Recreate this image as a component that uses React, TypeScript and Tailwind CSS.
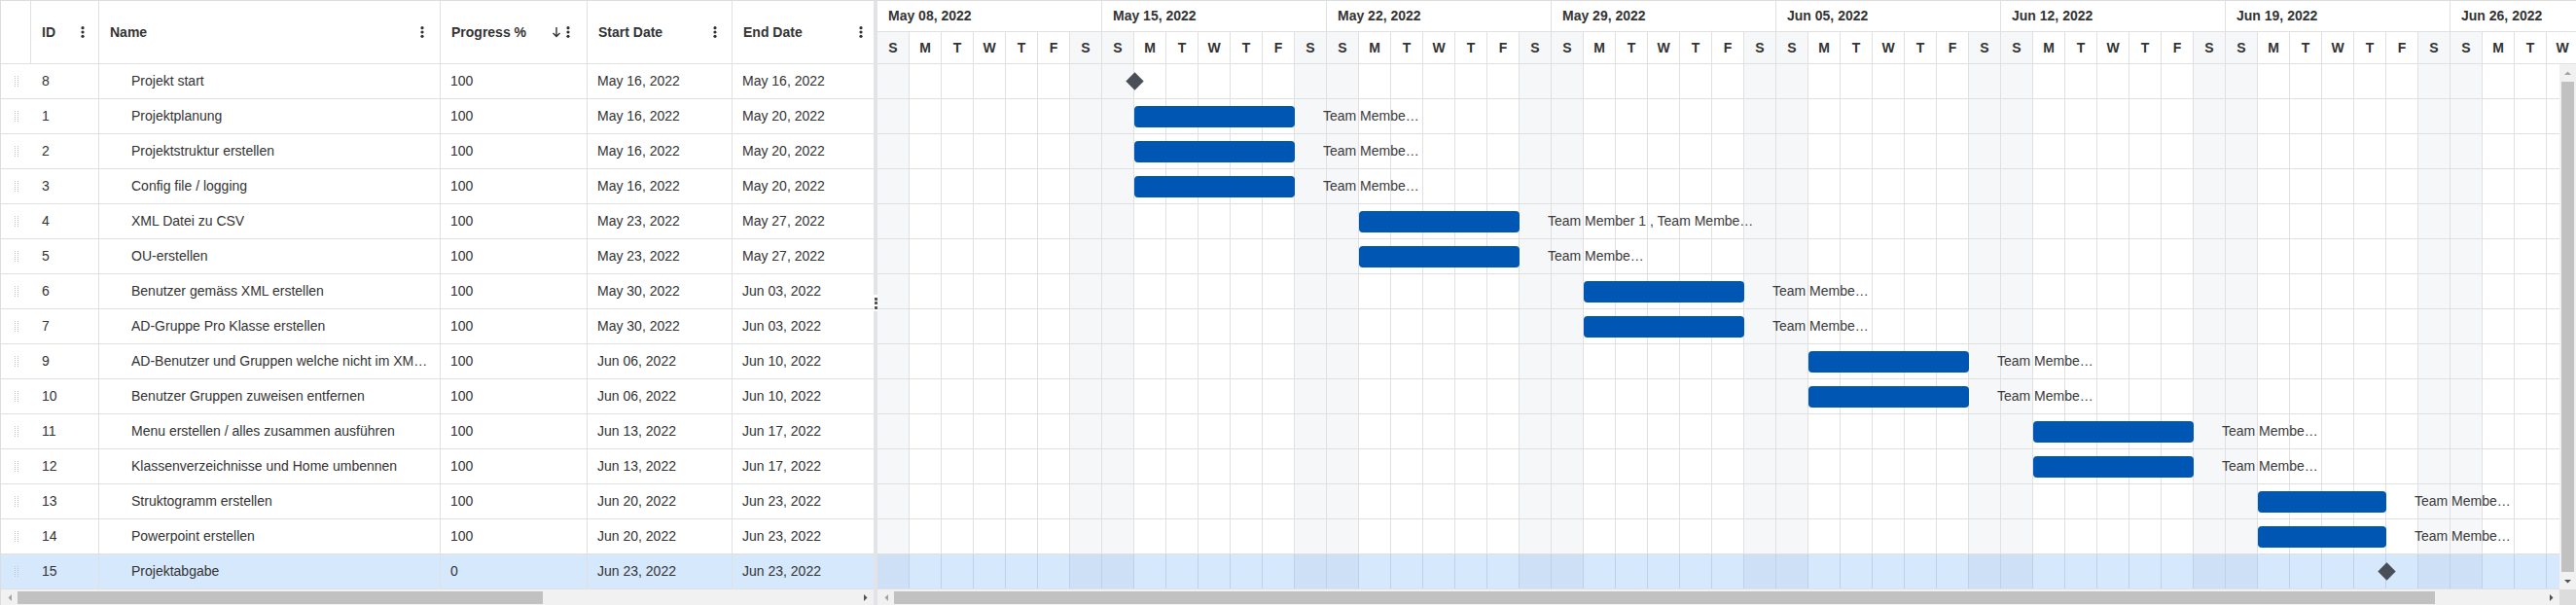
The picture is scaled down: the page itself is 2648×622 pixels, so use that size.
import React from "react"

// Gantt timeline: starts Sunday May 08, 2022
const DAY_W = 33
const DAYS = 53
const LETTERS = ["S", "M", "T", "W", "T", "F", "S"]
const WEEKS = [
  "May 08, 2022",
  "May 15, 2022",
  "May 22, 2022",
  "May 29, 2022",
  "Jun 05, 2022",
  "Jun 12, 2022",
  "Jun 19, 2022",
  "Jun 26, 2022",
]

type Task = {
  id: number
  name: string
  progress: number
  start: string
  end: string
  from: number
  days: number
  res?: string
}

const TASKS: Task[] = [
  { id: 8, name: "Projekt start", progress: 100, start: "May 16, 2022", end: "May 16, 2022", from: 8, days: 0 },
  { id: 1, name: "Projektplanung", progress: 100, start: "May 16, 2022", end: "May 20, 2022", from: 8, days: 5, res: "Team Membe…" },
  { id: 2, name: "Projektstruktur erstellen", progress: 100, start: "May 16, 2022", end: "May 20, 2022", from: 8, days: 5, res: "Team Membe…" },
  { id: 3, name: "Config file / logging", progress: 100, start: "May 16, 2022", end: "May 20, 2022", from: 8, days: 5, res: "Team Membe…" },
  { id: 4, name: "XML Datei zu CSV", progress: 100, start: "May 23, 2022", end: "May 27, 2022", from: 15, days: 5, res: "Team Member 1 , Team Membe…" },
  { id: 5, name: "OU-erstellen", progress: 100, start: "May 23, 2022", end: "May 27, 2022", from: 15, days: 5, res: "Team Membe…" },
  { id: 6, name: "Benutzer gemäss XML erstellen", progress: 100, start: "May 30, 2022", end: "Jun 03, 2022", from: 22, days: 5, res: "Team Membe…" },
  { id: 7, name: "AD-Gruppe Pro Klasse erstellen", progress: 100, start: "May 30, 2022", end: "Jun 03, 2022", from: 22, days: 5, res: "Team Membe…" },
  { id: 9, name: "AD-Benutzer und Gruppen welche nicht im XML sind löschen", progress: 100, start: "Jun 06, 2022", end: "Jun 10, 2022", from: 29, days: 5, res: "Team Membe…" },
  { id: 10, name: "Benutzer Gruppen zuweisen entfernen", progress: 100, start: "Jun 06, 2022", end: "Jun 10, 2022", from: 29, days: 5, res: "Team Membe…" },
  { id: 11, name: "Menu erstellen / alles zusammen ausführen", progress: 100, start: "Jun 13, 2022", end: "Jun 17, 2022", from: 36, days: 5, res: "Team Membe…" },
  { id: 12, name: "Klassenverzeichnisse und Home umbennen", progress: 100, start: "Jun 13, 2022", end: "Jun 17, 2022", from: 36, days: 5, res: "Team Membe…" },
  { id: 13, name: "Struktogramm erstellen", progress: 100, start: "Jun 20, 2022", end: "Jun 23, 2022", from: 43, days: 4, res: "Team Membe…" },
  { id: 14, name: "Powerpoint erstellen", progress: 100, start: "Jun 20, 2022", end: "Jun 23, 2022", from: 43, days: 4, res: "Team Membe…" },
  { id: 15, name: "Projektabgabe", progress: 0, start: "Jun 23, 2022", end: "Jun 23, 2022", from: 47, days: 0 },
]

const SELECTED = 15

function Dots() {
  return (
    <svg width="4" height="12" viewBox="0 0 4 12" className="shrink-0">
      <circle cx="2" cy="1.7" r="1.6" fill="#333" />
      <circle cx="2" cy="6" r="1.6" fill="#333" />
      <circle cx="2" cy="10.3" r="1.6" fill="#333" />
    </svg>
  )
}

function SortDown() {
  return (
    <svg width="10" height="12" viewBox="0 0 10 12" className="shrink-0">
      <path d="M5 1v9.5M1.5 7L5 10.5 8.5 7" stroke="#333" strokeWidth="1.4" fill="none" />
    </svg>
  )
}

function DragHandle() {
  return (
    <svg width="5" height="11" viewBox="0 0 5 11">
      {[0, 2, 4, 6, 8, 10].map((y) => (
        <g key={y}>
          <rect x="0" y={y} width="1" height="1" fill="#c4c4c4" />
          <rect x="3" y={y} width="1" height="1" fill="#c4c4c4" />
        </g>
      ))}
    </svg>
  )
}

function Arrow({ dir, dark }: { dir: "left" | "right" | "up" | "down"; dark?: boolean }) {
  const fill = dark ? "#505050" : "#a3a3a3"
  if (dir === "left") return <svg width="4" height="7"><polygon points="4,0 4,7 0.5,3.5" fill={fill} /></svg>
  if (dir === "right") return <svg width="4" height="7"><polygon points="0,0 0,7 3.5,3.5" fill={fill} /></svg>
  if (dir === "up") return <svg width="7" height="4"><polygon points="0,4 7,4 3.5,0.5" fill={fill} /></svg>
  return <svg width="7" height="4"><polygon points="0,0 7,0 3.5,3.5" fill={fill} /></svg>
}

function HeaderCell({ title, width, pr, sort, border = true }: { title: string; width: string; pr: string; sort?: boolean; border?: boolean }) {
  return (
    <div className={`${width} ${pr} flex h-full items-center justify-between pl-[11px] ${border ? "border-r border-[#e0e0e0]" : ""}`}>
      <span className="font-bold">{title}</span>
      <div className="flex items-center gap-[5px]">
        {sort && <SortDown />}
        <Dots />
      </div>
    </div>
  )
}

function TreeList() {
  return (
    <div className="flex h-full w-[898px] shrink-0 flex-col border-l border-[#dddddd]">
      <div className="flex h-[65px] shrink-0 border-b border-[#e0e0e0]">
        <div className="h-full w-[31px] border-r border-[#e0e0e0]" />
        <HeaderCell title="ID" width="w-[70px]" pr="pr-[14px]" />
        <HeaderCell title="Name" width="w-[351px]" pr="pr-[16px]" />
        <HeaderCell title="Progress %" width="w-[151px]" pr="pr-[17px]" sort />
        <HeaderCell title="Start Date" width="w-[149px]" pr="pr-[15px]" />
        <HeaderCell title="End Date" width="w-[145px]" pr="pr-[11px]" border={false} />
      </div>

      <div className="h-[540px] shrink-0">
        {TASKS.map((t) => (
          <div
            key={t.id}
            className={`flex h-[36px] border-b border-[#e0e0e0] ${t.id === SELECTED ? "bg-[#d6e8fb]" : ""}`}
          >
            <div className="flex h-full w-[31px] items-center pl-[14px]">
              <DragHandle />
            </div>
            <div className="flex h-full w-[70px] items-center border-r border-[#e0e0e0] pl-[11px]">{t.id}</div>
            <div className="flex h-full w-[351px] items-center border-r border-[#e0e0e0] pl-[33px] pr-[10px]">
              <span className="truncate">{t.name}</span>
            </div>
            <div className="flex h-full w-[151px] items-center border-r border-[#e0e0e0] pl-[10px]">{t.progress}</div>
            <div className="flex h-full w-[149px] items-center border-r border-[#e0e0e0] pl-[10px]">{t.start}</div>
            <div className="flex h-full w-[145px] items-center pl-[10px]">{t.end}</div>
          </div>
        ))}
      </div>

      <div className="flex h-[16px] shrink-0 items-center bg-[#f1f1f1]">
        <div className="flex h-full w-[17px] items-center justify-center">
          <Arrow dir="left" />
        </div>
        <div className="flex h-full flex-1 items-center">
          <div className="h-[13px] w-[540px] bg-[#c1c1c1]" />
        </div>
        <div className="flex h-full w-[17px] items-center justify-center">
          <Arrow dir="right" dark />
        </div>
      </div>
    </div>
  )
}

function Splitter() {
  return (
    <div className="flex h-full w-[4px] shrink-0 flex-col bg-[#e1e3e6]">
      <div className="flex-1" />
      <div className="flex h-[17px] flex-col items-center justify-center gap-[1.5px] bg-white">
        <div className="h-[3px] w-[3px] bg-[#555]" />
        <div className="h-[3px] w-[3px] bg-[#555]" />
        <div className="h-[3px] w-[3px] bg-[#555]" />
      </div>
      <div className="flex-1" />
    </div>
  )
}

function Timeline() {
  const days = Array.from({ length: DAYS }, (_, i) => i)

  return (
    <div className="flex h-full min-w-0 flex-1 flex-col">
      {/* scale */}
      <div className="h-[65px] shrink-0 overflow-hidden">
        <div className="w-[1749px]">
          <div className="flex h-[32px] border-b border-[#e0e0e0]">
            {WEEKS.map((w, i) => (
              <div
                key={w}
                className={`flex h-full items-center border-r border-[#e0e0e0] pl-[11px] font-bold ${
                  i === WEEKS.length - 1 ? "w-[132px]" : "w-[231px]"
                }`}
              >
                {w}
              </div>
            ))}
          </div>
          <div className="flex h-[33px] border-b border-[#e0e0e0]">
            {days.map((d) => (
              <div
                key={d}
                className={`flex h-full w-[33px] shrink-0 items-center justify-center border-r border-[#e0e0e0] font-bold ${
                  d % 7 === 0 || d % 7 === 6 ? "bg-[#f6f7f9]" : ""
                }`}
              >
                {LETTERS[d % 7]}
              </div>
            ))}
          </div>
        </div>
      </div>

      {/* chart */}
      <div className="flex h-[540px] shrink-0">
        <div className="min-w-0 flex-1 overflow-hidden">
          <div className="w-[1749px]">
            {TASKS.map((t) => {
              const sel = t.id === SELECTED
              return (
                <div key={t.id} className="relative flex h-[36px] border-b border-[#e0e0e0]">
                  {days.map((d) => {
                    const weekend = d % 7 === 0 || d % 7 === 6
                    return (
                      <div
                        key={d}
                        className={`h-full w-[33px] shrink-0 border-r ${
                          sel
                            ? weekend
                              ? "border-[#bcd2ea] bg-[#cde0f6]"
                              : "border-[#bcd2ea] bg-[#d5e8fc]"
                            : weekend
                              ? "border-[#e0e0e0] bg-[#f6f7f9]"
                              : "border-[#e0e0e0]"
                        }`}
                      />
                    )
                  })}

                  {t.days === 0 ? (
                    <div
                      className="absolute top-[11px] h-[13px] w-[13px] rotate-45 bg-[#4a4f57]"
                      style={{ left: t.from * DAY_W - 6.5 }}
                    />
                  ) : (
                    <>
                      <div
                        className="absolute top-[7px] h-[22px] rounded-[4px] bg-[#0056b3]"
                        style={{ left: t.from * DAY_W, width: t.days * DAY_W }}
                      />
                      <div
                        className="absolute top-0 flex h-full items-center whitespace-nowrap text-[#3a3a3a]"
                        style={{ left: (t.from + t.days) * DAY_W + 29 }}
                      >
                        {t.res}
                      </div>
                    </>
                  )}
                </div>
              )
            })}
          </div>
        </div>

        <div className="flex h-full w-[17px] shrink-0 flex-col bg-[#f1f1f1]">
          <div className="flex h-[17px] items-center justify-center">
            <Arrow dir="up" />
          </div>
          <div className="mx-[2px] my-[1px] flex-1 bg-[#c1c1c1]" />
          <div className="flex h-[17px] items-center justify-center">
            <Arrow dir="down" dark />
          </div>
        </div>
      </div>

      <div className="flex h-[16px] shrink-0">
        <div className="flex h-full min-w-0 flex-1 items-center bg-[#f1f1f1]">
          <div className="flex h-full w-[17px] items-center justify-center">
            <Arrow dir="left" />
          </div>
          <div className="flex h-full flex-1 items-center">
            <div className="h-[13px] w-[1584px] bg-[#c1c1c1]" />
          </div>
          <div className="flex h-full w-[17px] items-center justify-center">
            <Arrow dir="right" dark />
          </div>
        </div>
        <div className="h-full w-[17px] bg-[#dcdcdc]" />
      </div>
    </div>
  )
}

export default function App() {
  return (
    <div className="flex h-[622px] w-[2648px] overflow-hidden border-t border-[#dddddd] bg-white font-['Liberation_Sans',Arial,sans-serif] text-[14px] text-[#333]">
      <TreeList />
      <Splitter />
      <Timeline />
    </div>
  )
}
